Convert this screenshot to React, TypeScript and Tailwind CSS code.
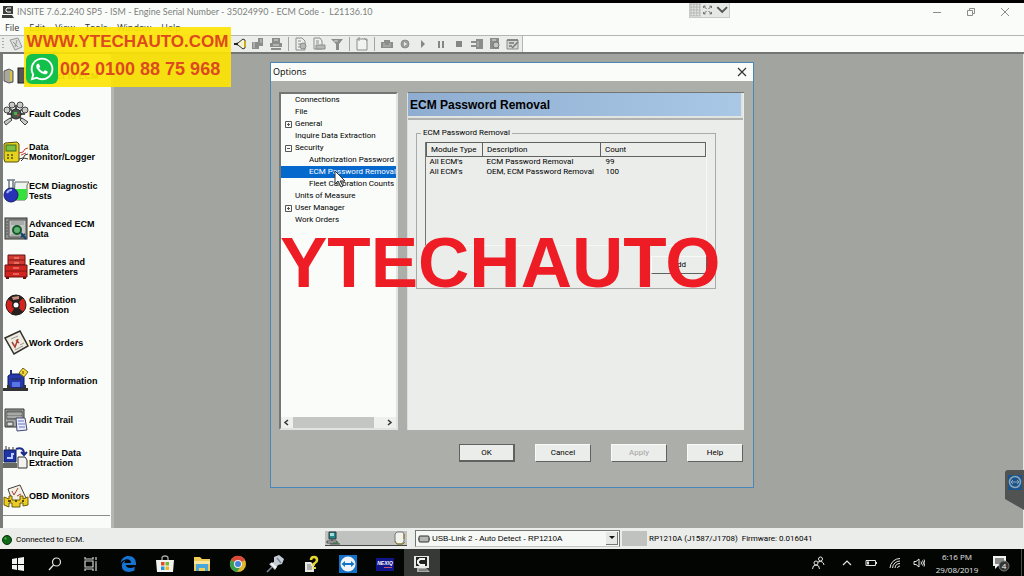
import React from 'react';
import { FaWhatsapp } from 'react-icons/fa';

const menuItems = ["File", "Edit", "View", "Tools", "Window", "Help"];

const treeItems = [
    { label: "Connections", level: 1, sign: "" },
    { label: "File", level: 1, sign: "" },
    { label: "General", level: 1, sign: "+" },
    { label: "Inquire Data Extraction", level: 1, sign: "" },
    { label: "Security", level: 1, sign: "-" },
    { label: "Authorization Password", level: 2, sign: "" },
    { label: "ECM Password Removal", level: 2, sign: "" },
    { label: "Fleet Calibration Counts", level: 2, sign: "" },
    { label: "Units of Measure", level: 1, sign: "" },
    { label: "User Manager", level: 1, sign: "+" },
    { label: "Work Orders", level: 1, sign: "" },
];

const counts = [
    { module: "All ECM's", description: "ECM Password Removal", count: "99" },
    { module: "All ECM's", description: "OEM, ECM Password Removal", count: "100" },
];

type IconProps = {
    children: React.ReactNode;
};

const SideIcon: React.FC<IconProps> = (props) => (
    <svg viewBox="0 0 26 26" className="w-[26px] h-[26px] shrink-0" aria-hidden="true">{props.children}</svg>
);

const ToolIcon: React.FC<IconProps> = (props) => (
    <svg viewBox="0 0 14 14" className="w-[14px] h-[14px]" aria-hidden="true">{props.children}</svg>
);

const TaskIcon: React.FC<IconProps> = (props) => (
    <svg viewBox="0 0 20 20" className="w-5 h-5" aria-hidden="true">{props.children}</svg>
);

const sideItems = [
    {
        label: "Connect to ECM",
        icon: (
            <SideIcon>
                <path d="M1 8l5-2 4 2v11l-4 1-5-2z" fill="#aaa79b" stroke="#555" />
                <path d="M8 8v10" stroke="#d8c63a" strokeWidth="2" />
                <rect x="15" y="5" width="10" height="15" fill="#555" stroke="#222" />
            </SideIcon>
        ),
    },
    {
        label: "Fault Codes",
        icon: (
            <SideIcon>
                <path d="M13 13L6 7M13 13V4M13 13l8-6M13 13l-9 8M13 13l9 8M13 13H4M13 13h9" stroke="#555" strokeWidth="2" />
                <g fill="#c9cbc8" stroke="#444">
                    <circle cx="4" cy="9" r="3" />
                    <circle cx="9" cy="4" r="3" />
                    <circle cx="17" cy="4" r="3" />
                    <circle cx="22" cy="9" r="3" />
                    <path d="M1 21l6-4 2 2-6 5zM25 21l-6-4-2 2 5 5z" />
                </g>
                <circle cx="13" cy="13" r="5" fill="#46564a" stroke="#222" />
                <path d="M11 11h3v3h-3z" fill="#4caf50" />
                <path d="M14 13h2v2h-2z" fill="#b83c32" />
            </SideIcon>
        ),
    },
    {
        label: "Data\nMonitor/Logger",
        icon: (
            <SideIcon>
                <path d="M2 4l12-1 2 2v17l-2 1H2L1 20V5z" fill="#e5d21d" stroke="#554e12" />
                <rect x="3" y="6" width="10" height="6" fill="#7dbf45" stroke="#3c6b20" />
                <path d="M4 16h2M8 16h2M4 19h2M8 19h2" stroke="#777021" strokeWidth="2" />
                <path d="M16 14l4-1 2-3 3-1M18 16l5-2" stroke="#c93838" fill="none" />
                <path d="M16 20l4-1 2-3 3-1M18 22l3-3 4 1" stroke="#333" fill="none" />
            </SideIcon>
        ),
    },
    {
        label: "ECM Diagnostic\nTests",
        icon: (
            <SideIcon>
                <path d="M12 4h14l-2 3v13l-2 2h-9l-2-3z" fill="#eef5ee" stroke="#666" />
                <path d="M13 11h11v9l-2 2h-8z" fill="#36e13e" />
                <path d="M4 2h8M6 2v9M10 2v9" stroke="#6d7886" strokeWidth="1.5" />
                <circle cx="8" cy="17" r="7" fill="#2732b8" stroke="#181d62" />
                <path d="M4 15a5 5 0 015-3" stroke="#a2b2ff" strokeWidth="2" fill="none" />
            </SideIcon>
        ),
    },
    {
        label: "Advanced ECM\nData",
        icon: (
            <SideIcon>
                <rect x="2" y="2" width="22" height="21" fill="#8e918e" stroke="#333" />
                <rect x="6" y="4" width="17" height="17" fill="#c3c6c2" stroke="#555" />
                <path d="M8 6h13M8 8h13M8 19h13" stroke="#8d908d" />
                <path d="M4 5v15" stroke="#555" strokeDasharray="2 1" />
                <circle cx="14" cy="14" r="4" fill="#65b078" stroke="#135a27" strokeWidth="2" />
                <path d="M18 17l5 6M18 21l4-3" stroke="#17446e" strokeWidth="2" />
            </SideIcon>
        ),
    },
    {
        label: "Features and\nParameters",
        icon: (
            <SideIcon>
                <path d="M5 1h17v10H5z" fill="#d23a32" stroke="#661310" />
                <path d="M2 11h22v12H2z" fill="#d2251f" stroke="#661310" />
                <path d="M5 6h17M2 17h22" stroke="#7d1613" />
                <path d="M11 4h5M11 9h5M10 14h6M10 20h6" stroke="#f4a29b" />
                <path d="M3 23v2h3v-2M20 23v2h3v-2" fill="#661310" />
            </SideIcon>
        ),
    },
    {
        label: "Calibration\nSelection",
        icon: (
            <SideIcon>
                <circle cx="13" cy="13" r="10" fill="#d4221c" stroke="#222" />
                <path d="M13 13L5 7a10 10 0 0115-1z" fill="#26211f" />
                <path d="M13 13l7 7a10 10 0 01-12 2z" fill="#26211f" />
                <path d="M9 5l7-1v3l-6 1z" fill="#c98f7c" />
                <circle cx="13" cy="13" r="4" fill="#222" />
                <circle cx="13" cy="13" r="2.5" fill="#fff" />
            </SideIcon>
        ),
    },
    {
        label: "Work Orders",
        icon: (
            <SideIcon>
                <path d="M2 8L17 1l8 15-14 8z" fill="#efece0" stroke="#33312b" strokeWidth="1.5" />
                <path d="M8 9l7-3M17 15l4-2M12 20l8-4" stroke="#999" />
                <path d="M9 12l3 5 3-8M13 10l3 3" stroke="#a83f38" strokeWidth="1.5" fill="none" />
            </SideIcon>
        ),
    },
    {
        label: "Trip Information",
        icon: (
            <SideIcon>
                <path d="M5 8l3-2h10l3 3v11H5z" fill="#2539ae" stroke="#101a52" />
                <path d="M8 6V2M8 11h10" stroke="#26326f" strokeWidth="2" />
                <path d="M9 14h8v5H9z" fill="#5b74e4" />
                <path d="M0 20h25v3H0zM4 17h3v6H4zM20 17h3v6h-3z" fill="#333" />
                <path d="M20 0l5 4-4 5-5-4z" fill="#f2db36" stroke="#6f6416" />
                <path d="M20 3v3" stroke="#4f470d" />
            </SideIcon>
        ),
    },
    {
        label: "Audit Trail",
        icon: (
            <SideIcon>
                <path d="M2 2h19v18H2z" fill="#a5a7a4" stroke="#333" />
                <path d="M4 4h15v8H4z" fill="#858885" stroke="#555" />
                <path d="M4 7h15M4 10h15" stroke="#c8cac7" />
                <path d="M4 15h6v4H4z" fill="#ddd" stroke="#444" />
                <path d="M13 11h9l2 12-10 1z" fill="#e9ecfa" stroke="#44496d" />
                <path d="M15 14h6M15 17h7M16 20h6" stroke="#6470bd" />
            </SideIcon>
        ),
    },
    {
        label: "Inquire Data\nExtraction",
        icon: (
            <SideIcon>
                <path d="M1 5h12v12H1z" fill="#1f36a8" stroke="#101a52" />
                <path d="M3 5V1M6 5V2M10 5V2" stroke="#333" />
                <path d="M4 13h5V9h2" stroke="#c0caff" strokeWidth="2" fill="none" />
                <path d="M0 18h14v5H0z" fill="#666862" />
                <path d="M15 12h7l2 3v8h-9z" fill="#f2f2ee" stroke="#333" />
                <path d="M13 4c5-2 8 0 8 5M18 7l3 3 3-3" stroke="#1d2c8c" strokeWidth="2" fill="none" />
            </SideIcon>
        ),
    },
    {
        label: "OBD Monitors",
        icon: (
            <SideIcon>
                <path d="M5 6l12-4 6 13-13 5z" fill="#f2efe5" stroke="#45423b" />
                <path d="M9 8l2 4 4-7M14 13l4-2" stroke="#a83f38" fill="none" />
                <path d="M1 14l5 2v-3h3v4h8v-4h3v3l5-2v8l-5 1v-3h-3v4H9v-4H6v4l-5-2z" fill="#eccb22" stroke="#6c5c0c" />
                <path d="M5 18h3M12 18h2M19 18h2" stroke="#4f4409" strokeWidth="2" />
            </SideIcon>
        ),
    },
];

const toolGroups = [
    [
        {
            name: "Horn",
            icon: <ToolIcon><path d="M1 7l4-1 5-4 2 1v8l-2 1-5-4z" fill="#f6f3d0" stroke="#333" /><path d="M1 7h4" stroke="#222" strokeWidth="2" /><path d="M12 4v6" stroke="#c5ae25" strokeWidth="2" /></ToolIcon>,
        },
        {
            name: "Send",
            icon: <ToolIcon><path d="M1 5h7v7H1zM7 1h5v8H7z" fill="#8b8d8a" /><path d="M3 5v6M9 3h2M9 5h2" stroke="#ccc" /></ToolIcon>,
        },
        {
            name: "Print",
            icon: <ToolIcon><path d="M3 1h8v5H3zM1 6h12v4H1zM2 11h10v2H2z" fill="#8b8d8a" /><path d="M5 3h4M4 8h6" stroke="#ddd" /></ToolIcon>,
        },
    ],
    [
        {
            name: "Preview",
            icon: <ToolIcon><path d="M2 1h6l3 3v9H2z" fill="#eee" stroke="#8b8d8a" /><path d="M4 4h3M4 7h3M4 10h2" stroke="#8b8d8a" /><circle cx="9" cy="9" r="3" fill="#b6b8b5" stroke="#8b8d8a" /></ToolIcon>,
        },
        {
            name: "Open",
            icon: <ToolIcon><path d="M2 1h6l2 3v8H2z" fill="#eee" stroke="#8b8d8a" /><path d="M4 4h3M4 6h3" stroke="#8b8d8a" /><path d="M4 8h9v4H4z" fill="#b6b8b5" stroke="#8b8d8a" /></ToolIcon>,
        },
        {
            name: "Filter",
            icon: <ToolIcon><path d="M1 2h12L9 7v6H6V7z" fill="#8b8d8a" /><path d="M4 4h4" stroke="#ddd" /></ToolIcon>,
        },
    ],
    [
        {
            name: "New",
            icon: <ToolIcon><path d="M2 2h10v11H2z" fill="#f1f3f0" stroke="#8b8d8a" /><path d="M4 0v4M9 1l3 3" stroke="#8b8d8a" /></ToolIcon>,
        },
    ],
    [
        {
            name: "Capture",
            icon: <ToolIcon><path d="M1 5h12v6H1zM4 3h6v2H4z" fill="#8b8d8a" /><path d="M3 7h2M9 7h2M3 9h8" stroke="#bbb" /></ToolIcon>,
        },
        {
            name: "Resume",
            icon: <ToolIcon><circle cx="7" cy="7" r="4" fill="#9c9e9b" stroke="#8b8d8a" /><path d="M6 5v4l3-2z" fill="#eee" /></ToolIcon>,
        },
        {
            name: "Play",
            icon: <ToolIcon><path d="M5 3v8l4-4z" fill="#858784" /></ToolIcon>,
        },
        {
            name: "Pause",
            icon: <ToolIcon><path d="M4 4h2v7H4zM8 4h2v7H8z" fill="#858784" /></ToolIcon>,
        },
        {
            name: "Stop",
            icon: <ToolIcon><path d="M4 4h6v6H4z" fill="#858784" /></ToolIcon>,
        },
        {
            name: "Log",
            icon: <ToolIcon><path d="M6 2h7v10H6zM1 4h5v2H1zM1 8h5v2H1z" fill="#8b8d8a" /><path d="M8 4v6" stroke="#bbb" /></ToolIcon>,
        },
        {
            name: "Report",
            icon: <ToolIcon><path d="M2 1h9v11H2z" fill="#8b8d8a" /><circle cx="8" cy="8" r="3" fill="#c4c6c3" stroke="#777" /><path d="M4 3h4" stroke="#ddd" /></ToolIcon>,
        },
        {
            name: "Edit note",
            icon: <ToolIcon><path d="M1 3h11v9H1z" fill="#d4d6d3" stroke="#8b8d8a" /><path d="M1 3h11M3 6h5M3 9h3M6 11l6-6" stroke="#777" strokeWidth="1.5" /></ToolIcon>,
        },
    ],
];

const taskItems = [
    {
        name: "Start",
        icon: <TaskIcon><path d="M4 5l5-1v6H4zM10 4l6-1v7h-6zM4 11h5v5l-5-1zM10 11h6v6l-6-1z" fill="#f1f3f0" /></TaskIcon>,
    },
    {
        name: "Search",
        icon: <TaskIcon><circle cx="11.5" cy="8" r="4" fill="none" stroke="#e4e6e3" strokeWidth="1.2" /><path d="M8.5 11L4 16" stroke="#e4e6e3" strokeWidth="1.3" /></TaskIcon>,
    },
    {
        name: "Task View",
        icon: <TaskIcon><path d="M4 3v2h8V3M4 17v-2h8v2M4 7h8v6H4zM15 3v3M15 9v8M14 8h2" fill="none" stroke="#d5d7d4" strokeWidth="1.2" /></TaskIcon>,
    },
    {
        name: "Edge",
        icon: <TaskIcon><path d="M2.5 9C3.5 4.5 6.5 2 10.5 2c5 0 7.5 3.5 7.5 7.5V11H7.8c.2 3 5 4 8.800 1.800v3.500C11 19.500 3.500 18 3.800 11.500c.2-2.500 1.700-4.300 4-5.300-1 1-1.300 1.800-1.400 2.800H13c0-5-7-5-10.500 0z" fill="#1673d2" /></TaskIcon>,
    },
    {
        name: "Store",
        icon: (
            <TaskIcon>
                <path d="M7 6V4q0-2 3-2t3 2v2" fill="none" stroke="#aaa" strokeWidth="1.3" />
                <path d="M1 6h18l-1 12H2z" fill="#f1f3f0" />
                <path d="M6 8h3.500v3.500H6z" fill="#e04b2b" />
                <path d="M10.500 8H14v3.500h-3.500z" fill="#79b82c" />
                <path d="M6 12.500h3.500V16H6z" fill="#2595db" />
                <path d="M10.500 12.500H14V16h-3.500z" fill="#eeb91e" />
            </TaskIcon>
        ),
    },
    {
        name: "File Explorer",
        icon: <TaskIcon><path d="M2 3h6l2 2h8v12H2z" fill="#f1cd58" /><path d="M2 7h16v3H2z" fill="#f9e79d" /><path d="M4 10h12v7h-3v-3H7v3H4z" fill="#4aa7d9" /></TaskIcon>,
    },
    {
        name: "Chrome",
        icon: (
            <TaskIcon>
                <circle cx="10" cy="10" r="8" fill="#e0b92b" />
                <path d="M10 10L3 6a8 8 0 0114 0z" fill="#d94a38" />
                <path d="M10 10L3 6a8 8 0 006 12l4-6z" fill="#3c9c50" />
                <circle cx="10" cy="10" r="4" fill="#f1f3f0" />
                <circle cx="10" cy="10" r="3" fill="#4381dd" />
            </TaskIcon>
        ),
    },
    {
        name: "Snip",
        icon: <TaskIcon><path d="M9 3l5-2 5 4-2 5-4 1-3 5-6-6 5-2z" fill="#c4cbd5" /><path d="M7 13l-5 5M12 4l4 5" stroke="#7d8796" strokeWidth="1.5" /><path d="M6 9l5 5" stroke="#f4f5f7" strokeWidth="2" /></TaskIcon>,
    },
    {
        name: "Help File",
        icon: <TaskIcon><path d="M3 8h6l3 3v7H3z" fill="#e7e8e1" /><path d="M5 11h4M5 13h5M5 15h5" stroke="#777" /><path d="M9 6q0-3 3-3t3 3q0 2-2 3t-1 3" fill="none" stroke="#e7d72b" strokeWidth="2.5" /><path d="M11 13h3v2h-3z" fill="#e7d72b" /></TaskIcon>,
    },
    {
        name: "TeamViewer",
        icon: <TaskIcon><rect x="1" y="1" width="18" height="18" fill="#1672c8" /><circle cx="10" cy="10" r="7.5" fill="#f1f5f8" /><path d="M3.500 10L7 7v2h6V7l3.500 3-3.500 3v-2H7v2z" fill="#1672c8" /></TaskIcon>,
    },
    {
        name: "Nexiq",
        icon: (
            <TaskIcon>
                <rect x="1" y="4" width="18" height="13" fill="#10158a" />
                <text x="10" y="11" textAnchor="middle" fontFamily="Liberation Sans, sans-serif" fontSize="5" fontWeight="bold" fontStyle="italic" fill="#fff">NEXIQ</text>
                <path d="M9 13.500h8" stroke="#bd5a72" />
            </TaskIcon>
        ),
    },
    {
        name: "INSITE",
        icon: <TaskIcon><path d="M2 2h15v12H2z" fill="#e7e9e6" /><path d="M4 3h11v9H4z" fill="#20221f" /><path d="M13 5H8L6 7v2l2 2h5" stroke="#f4f6f3" strokeWidth="2" fill="none" /><path d="M5 14h9l4 4H5z" fill="#a9aba8" /><path d="M7 16h8" stroke="#555" /></TaskIcon>,
    },
];

const dialogButton = "w-14 h-[18px] bg-[#ebedea] text-[8px] leading-[10px] border border-[#f8faf7] border-r-[#60625f] border-b-[#60625f]";

const Sidebar: React.FC = () => (
    <nav className="w-[114px] shrink-0 border-l-[3px] border-[#797b79] bg-[#fafcf9] border-r-[3px] border-r-[#b4b6b3] pt-[3px]">
        <ul className="flex flex-col h-[459px] border-b border-[#8b8d8a] mr-px">
            {sideItems.map((item) => (
                <li key={item.label} className="grow basis-0 flex">
                    <button type="button" className="w-full flex items-center text-left font-bold text-[9px] leading-[10px] text-black whitespace-pre">
                        {item.icon}
                        <span>{item.label}</span>
                    </button>
                </li>
            ))}
        </ul>
    </nav>
);

const OptionsTree: React.FC = () => (
    <div className="w-[119px] shrink-0 flex flex-col justify-between bg-[#fafcf9] border-2 border-t-[#747674] border-l-[#747674] border-r-[#e2e4e1] border-b-[#e2e4e1]">
        <ul>
            {treeItems.map((item) => (
                <li
                    key={item.label}
                    className={
                        "flex items-center h-3 text-[8px] leading-3 whitespace-nowrap " +
                        (item.level == 2 ? "pl-[14px] " : "") +
                        (item.label == "ECM Password Removal" ? "bg-[#0568cd] text-white" : "text-black")
                    }
                >
                    <span className="w-[14px] shrink-0 flex justify-center">
                        {item.sign != "" && (
                            <svg viewBox="0 0 7 7" className="w-[7px] h-[7px]" aria-hidden="true">
                                <path d={item.sign == "+" ? "M.5.5h6v6h-6zM2 3.500h3M3.500 2v3" : "M.5.5h6v6h-6zM2 3.500h3"} fill="none" stroke="#555" />
                            </svg>
                        )}
                    </span>
                    {item.label}
                </li>
            ))}
        </ul>
        <div className="flex items-center h-[11px] bg-[#eef0ed]">
            <svg viewBox="0 0 12 11" className="w-3 h-[11px]" aria-hidden="true"><path d="M7 3L4 5.500 7 8" fill="none" stroke="#333" strokeWidth="1.5" /></svg>
            <div className="w-[81px] h-full bg-[#c4c6c3]" />
            <svg viewBox="0 0 12 11" className="w-3 h-[11px] ml-auto" aria-hidden="true"><path d="M4 3l3 2.500L4 8" fill="none" stroke="#333" strokeWidth="1.5" /></svg>
        </div>
    </div>
);

const OptionsDialog: React.FC = () => (
    <section className="absolute left-[270px] top-2 w-[484px] bg-[#acaeaa] border border-[#4a87b9] text-black">
        <header className="h-[18px] flex items-center justify-between bg-[#fafcf9] pl-[2px] pr-[6px]">
            <h2 className="font-['Open_Sans',sans-serif] text-[9px] leading-3">Options</h2>
            <button type="button" aria-label="Close options">
                <svg viewBox="0 0 10 10" className="w-[10px] h-[10px]"><path d="M1 1l8 8M9 1L1 9" stroke="#333" strokeWidth="1.2" /></svg>
            </button>
        </header>
        <div className="flex gap-[9px] pt-[11px] pl-2 pr-[9px] h-[349px]">
            <OptionsTree />
            <div className="grow bg-[#ebedea] border-t border-t-[#747674] border-l border-l-[#dcdedb]">
                <div className="border-b-2 border-[#b0b2af] mr-px">
                    <h3 className="h-[25px] pl-[2px] flex items-center border-b-2 border-r-2 border-[#e2e4e1] bg-linear-to-r from-[#8fadd0] to-[#a9c8e6] font-['Liberation_Sans',sans-serif] font-bold text-[12px] leading-4">ECM Password Removal</h3>
                </div>
                <fieldset className="mt-2 ml-2 mr-7 border border-[#a9aba8] px-2 pb-[14px] text-[8px] leading-[10px]">
                    <legend className="ml-[-4px] px-[2px]">ECM Password Removal</legend>
                    <div className="mt-1 h-[104px] border-l border-l-[#747674] border-b border-b-[#f5f7f4] border-r border-r-[#f5f7f4]">
                        <table className="w-full table-fixed border-collapse text-left">
                            <thead>
                                <tr className="h-[14px]">
                                    <th className="w-14 border border-[#60625f] font-normal pl-1 py-0 whitespace-nowrap">Module Type</th>
                                    <th className="w-[118px] border border-[#60625f] font-normal pl-1 py-0">Description</th>
                                    <th className="border border-[#60625f] font-normal pl-1 py-0">Count</th>
                                </tr>
                            </thead>
                            <tbody>
                                {counts.map((row) => (
                                    <tr key={row.description}>
                                        <td className="pl-[3px] py-0">{row.module}</td>
                                        <td className="pl-1 py-0 whitespace-nowrap">{row.description}</td>
                                        <td className="pl-[5px] py-0">{row.count}</td>
                                    </tr>
                                ))}
                            </tbody>
                        </table>
                    </div>
                    <div className="flex justify-end mt-[10px]">
                        <button type="button" className={dialogButton}>Add</button>
                    </div>
                </fieldset>
            </div>
        </div>
        <footer className="flex justify-end gap-5 pt-[14px] pr-[10px] pb-[25px]">
            <button type="button" className="w-14 h-[18px] bg-[#ebedea] text-[8px] leading-[10px] border border-[#60625f] border-r-2 border-b-2">OK</button>
            <button type="button" className={dialogButton}>Cancel</button>
            <button type="button" disabled className={dialogButton + " text-[#a2a4a1]"}>Apply</button>
            <button type="button" className={dialogButton}>Help</button>
        </footer>
    </section>
);

const StatusBar: React.FC = () => (
    <footer className="h-[21px] shrink-0 flex items-center bg-[#ebedea] text-[8px] leading-[10px] text-black">
        <div className="w-[325px] flex items-center gap-1 pl-[2px] pt-[2px]">
            <svg viewBox="0 0 10 10" className="w-[10px] h-[10px]" aria-hidden="true">
                <circle cx="5" cy="5" r="4.5" fill="#0d6b16" stroke="#0a2f0d" />
                <circle cx="3.5" cy="3.5" r="1" fill="#69b36e" />
            </svg>
            Connected to ECM.
        </div>
        <div className="w-[82px] h-[15px] flex items-end justify-between bg-[#c0c2bf] border-b border-[#444]">
            <svg viewBox="0 0 16 14" className="w-4 h-[14px]" aria-hidden="true">
                <path d="M4 1h7v7H4z" fill="#20878a" stroke="#333" />
                <path d="M5 2h4v3H5z" fill="#9fe0df" />
                <path d="M2 10h10v2H2zM7 8v2M5 13h10" fill="#ddd" stroke="#444" />
                <path d="M8 12h6" stroke="#2d7b36" />
            </svg>
            <svg viewBox="0 0 16 14" className="w-4 h-[14px]" aria-hidden="true">
                <path d="M6 1h6l1 2v7l-2 3H6L4 11V3z" fill="#f1f2e9" stroke="#777" />
                <path d="M4 10l2 3h6l2-2M13 3v5" stroke="#8d7a22" fill="none" />
            </svg>
        </div>
        <div className="relative ml-2">
            <select aria-label="Adapter" className="appearance-none w-[205px] h-[17px] pl-4 bg-[#f6f8f5] border border-[#747674] border-b-[#c4c6c3] font-['Liberation_Sans',sans-serif] text-[8px] leading-[10px] text-black rounded-none">
                <option>USB-Link 2 - Auto Detect - RP1210A</option>
            </select>
            <svg viewBox="0 0 12 8" className="absolute left-[3px] top-[5px] w-3 h-2 pointer-events-none" aria-hidden="true">
                <rect x="1" y="1" width="10" height="6" rx="1" fill="#b5b7b4" stroke="#333" />
                <path d="M0 3v2M12 3v2" stroke="#333" />
            </svg>
            <span className="absolute right-[2px] top-[2px] w-3 h-[13px] flex items-center justify-center bg-[#e6e8e5] border-r border-b border-[#747674] pointer-events-none">
                <svg viewBox="0 0 6 4" className="w-[6px] h-1" aria-hidden="true"><path d="M0 0h6L3 3z" fill="#111" /></svg>
            </span>
        </div>
        <div className="w-[25px] h-[15px] ml-[2px] bg-[#c0c2bf]" />
        <p className="ml-[2px] whitespace-pre">RP1210A (J1587/J1708)  Firmware: 0.016041</p>
    </footer>
);

const Taskbar: React.FC = () => (
    <footer className="h-[27px] shrink-0 flex items-center justify-between bg-[#030503] text-white">
        <div className="w-[440px] h-full flex justify-between">
            {taskItems.map((item) => (
                <button
                    key={item.name}
                    type="button"
                    aria-label={item.name}
                    className={"w-9 h-full flex items-center justify-center pt-[2px] " + (item.name == "INSITE" ? "bg-[#373937]" : "")}
                >
                    {item.icon}
                </button>
            ))}
        </div>
        <div className="h-full flex items-center border-r border-[#4c4e4c] mr-[2px]">
            <div className="flex items-center gap-3 text-[#e4e6e3]">
                <svg viewBox="0 0 14 14" className="w-[14px] h-[14px] mr-1" aria-label="People"><g fill="none" stroke="currentColor"><circle cx="5" cy="7" r="2" /><path d="M1.500 13q0-4 3.500-4t3.500 4" /><circle cx="9.5" cy="3" r="2" /><path d="M7 6q5-2 6 3" /></g></svg>
                <svg viewBox="0 0 12 12" className="w-3 h-3" aria-label="Hidden icons"><path d="M2 8l4-4 4 4" fill="none" stroke="currentColor" strokeWidth="1.2" /></svg>
                <svg viewBox="0 0 12 12" className="w-3 h-3" aria-label="Battery"><path d="M1 3.500h9.500v5H1zM11.500 5v2" fill="none" stroke="currentColor" /><path d="M3 4.500v3" stroke="currentColor" strokeWidth="2" /></svg>
                <svg viewBox="0 0 12 12" className="w-3 h-3" aria-label="Network"><g fill="none" stroke="currentColor"><path d="M1 11A10 10 0 0111 1.500M3.500 11A7.500 7.500 0 0111 4M6 11a5 5 0 015-4.500M8.500 11A2.500 2.500 0 0111 9" /></g></svg>
                <svg viewBox="0 0 12 12" className="w-3 h-3" aria-label="Volume"><path d="M1 4.500h2L6 2v8L3 7.500H1zM8 4.500q1 1.500 0 3M9.500 3.500q2 2.500 0 5M11 2.500q2 3.500 0 7" fill="none" stroke="currentColor" /></svg>
            </div>
            <div className="w-12 ml-2 flex flex-col items-center font-['Open_Sans',sans-serif] text-[8px] leading-[13px] text-[#e4e6e3]">
                <span>6:16 PM</span>
                <span>29/08/2019</span>
            </div>
            <div className="w-10 flex justify-center">
                <svg viewBox="0 0 20 18" className="w-5 h-[18px]" aria-label="Notifications">
                    <path d="M2 2h13v10H7l-3 3v-3H2z" fill="#f1f3f0" />
                    <path d="M4 5h9M4 7h9M4 9h6" stroke="#222" />
                    <circle cx="13" cy="12" r="5" fill="#333533" stroke="#777" />
                    <text x="13" y="15" textAnchor="middle" fontSize="8" fontFamily="Open Sans, sans-serif" fill="#fff">4</text>
                </svg>
            </div>
        </div>
    </footer>
);

const App: React.FC = () => {
    return (
        <div className="relative h-screen flex flex-col overflow-hidden bg-[#fafcf9] border-t-[3px] border-black font-[Roboto,'Liberation_Sans',sans-serif]">
            <header className="shrink-0">
                <div className="relative h-[17px] flex items-center justify-between pl-[2px] pr-[14px]">
                    <div className="flex items-center gap-[3px]">
                        <svg viewBox="0 0 12 12" className="w-3 h-3" aria-hidden="true">
                            <path d="M1 0h10v8H1zM0 9h10l2 3H0z" fill="#3c3e3c" />
                            <path d="M9 2H5L4 3v2l1 1h4" fill="none" stroke="#fff" />
                        </svg>
                        <h1 className="font-[Lato,sans-serif] text-[9px] leading-3 text-[#7d7f7d] whitespace-pre">INSITE 7.6.2.240 SP5 - ISM - Engine Serial Number - 35024990 - ECM Code -  L21136.10</h1>
                    </div>
                    <div className="flex items-center gap-6 text-[#8b8d8a]">
                        <button type="button" aria-label="Minimize"><svg viewBox="0 0 10 10" className="w-[10px] h-[10px]"><path d="M1 5.500h8" stroke="currentColor" /></svg></button>
                        <button type="button" aria-label="Restore"><svg viewBox="0 0 10 10" className="w-[10px] h-[10px]"><path d="M1.500 3.500h5v5h-5zM3.500 3.500v-2h5v5h-2" fill="none" stroke="currentColor" /></svg></button>
                        <button type="button" aria-label="Close"><svg viewBox="0 0 10 10" className="w-[10px] h-[10px]"><path d="M1 1l8 8M9 1L1 9" stroke="currentColor" /></svg></button>
                    </div>
                    <div className="absolute left-[689px] top-0 w-[41px] h-[15px] flex items-center bg-[#e6e8e5] border border-t-0 border-[#c9cbc8]">
                        <svg viewBox="0 0 40 14" className="w-10 h-[14px]" aria-hidden="true">
                            <path d="M1 0v13M4 0v13M7 0v13M10 0v13M0 1h11M0 4h11M0 7h11M0 10h11M0 13h11" stroke="#b4b6b3" />
                            <path d="M14 5V3h2M20 3h2v2M22 9v2h-2M16 11h-2V9M14 3l3 3M22 3l-3 3M22 11l-3-3M14 11l3-3" stroke="#666" fill="none" />
                            <path d="M28 4l5 5 5-5" stroke="#555" strokeWidth="2" fill="none" />
                        </svg>
                    </div>
                </div>
                <nav className="h-[15px] flex items-center gap-[10px] pl-[5px] font-['Open_Sans',sans-serif] text-[9px] leading-3 text-[#333]">
                    {menuItems.map((item) => (
                        <button key={item} type="button">{item}</button>
                    ))}
                </nav>
                <div className="h-[19px] flex border-t border-[#b4b6b3] border-b-2 border-b-[#747674]">
                    <div className="flex items-center bg-[#ebedea] border-r border-[#b4b6b3]">
                        <div className="w-[231px] flex items-center gap-[5px] pl-[2px]">
                            <svg viewBox="0 0 2 12" className="w-[2px] h-3" aria-hidden="true"><path d="M1 0v12" stroke="#aaa" strokeWidth="2" strokeDasharray="1 2" /></svg>
                            <ToolIcon><path d="M1 3l8-2 4 9-7 3z" fill="#dcdedb" stroke="#999" /><path d="M4 5l5 5M8 3l-2 7" stroke="#999" /></ToolIcon>
                        </div>
                        {toolGroups.map((group, index) => (
                            <div key={index} className="flex items-center">
                                {index > 0 && <div className="w-px h-[14px] mx-[3px] bg-[#a2a4a1]" />}
                                {group.map((tool) => (
                                    <button key={tool.name} type="button" aria-label={tool.name} className="w-[18px] h-4 flex items-center justify-center">{tool.icon}</button>
                                ))}
                            </div>
                        ))}
                    </div>
                </div>
            </header>

            <main className="relative grow flex bg-[#a2a4a0] border-r border-[#e6e8e5] font-['Liberation_Sans',sans-serif]">
                <Sidebar />
                <div className="font-[Roboto,sans-serif]">
                    <OptionsDialog />
                </div>
                <button type="button" aria-label="TeamViewer panel" className="absolute right-[-1px] top-[416px]">
                    <svg viewBox="0 0 19 40" className="w-[19px] h-10">
                        <path d="M3 0h16v40L0 29V3q0-3 3-3z" fill="#505352" />
                        <rect x="3" y="5" width="14" height="15" fill="#1b548b" />
                        <circle cx="10" cy="12" r="5.5" fill="none" stroke="#8fa6b9" strokeWidth="1.5" />
                        <path d="M6 12h8M8 10l-2 2 2 2M12 10l2 2-2 2" fill="none" stroke="#8fa6b9" />
                    </svg>
                </button>
            </main>

            <StatusBar />
            <Taskbar />

            <aside className="absolute left-6 top-6 w-[207px] h-[60px] flex flex-col bg-[#fde404]/92 font-['Liberation_Sans',sans-serif] font-bold text-[#dc4a1e] whitespace-nowrap">
                <p className="h-[27px] text-center text-[17px] leading-[29px]">WWW.YTECHAUTO.COM</p>
                <div className="flex items-center gap-[2px] pl-[2px]">
                    <span className="w-8 h-[30px] flex items-center justify-center rounded-md bg-[#12c04a] text-white">
                        <FaWhatsapp className="w-[26px] h-[26px]" />
                    </span>
                    <p className="text-[18px] leading-[30px]">002 0100 88 75 968</p>
                </div>
            </aside>

            <p className="absolute left-[280px] top-[220px] font-['Liberation_Sans',sans-serif] font-bold text-[71px] leading-[80px] text-[#ee1c25] pointer-events-none">YTECHAUTO</p>

            <svg viewBox="0 0 12 19" className="absolute left-[334px] top-[167px] w-3 h-[19px] pointer-events-none" aria-hidden="true">
                <path d="M1 1v13l3-3 3 6 2-1-3-5h5z" fill="#fff" stroke="#333" />
            </svg>
        </div>
    );
};

export default App;
